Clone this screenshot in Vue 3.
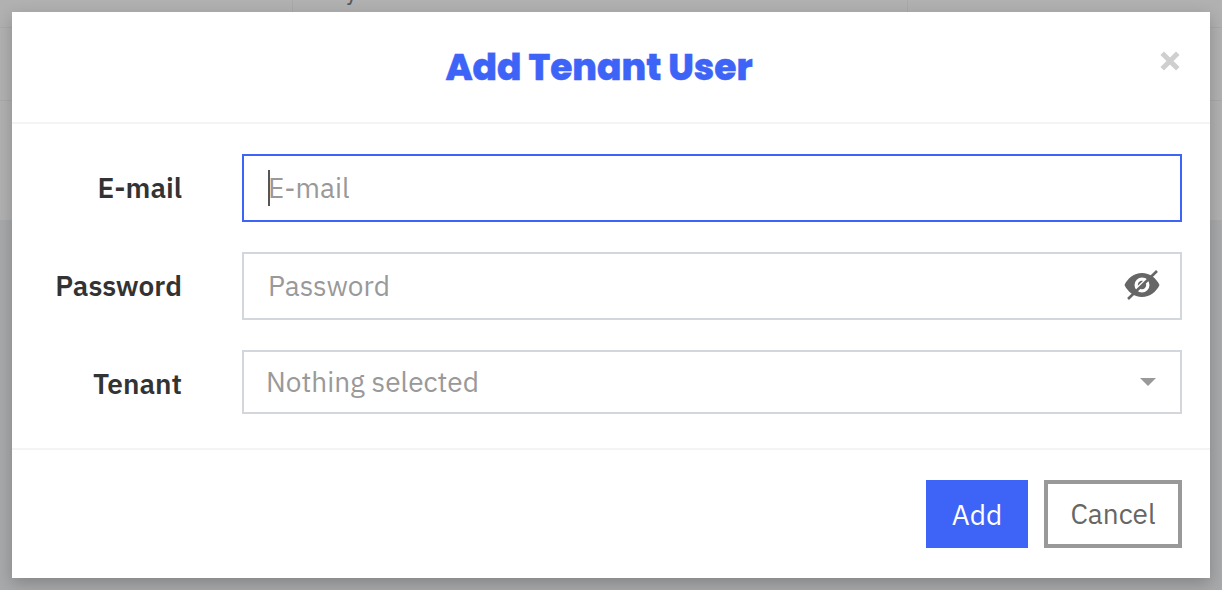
<script setup>
const fields = [
  { label: 'E-mail', placeholder: 'E-mail' },
  { label: 'Password', placeholder: 'Password' },
]
</script>

<template>
  <div class="page">
    <div class="backdrop">
      <div class="bg-top">
        <div class="bg-row">
          <div class="bg-cell-a"></div>
          <div class="bg-cell-b"><span class="bg-text">Only one</span></div>
          <div class="bg-cell-c"></div>
        </div>
        <div class="bg-row2"></div>
      </div>
    </div>
    <section class="modal">
      <header class="modal-head">
        <h2 class="title">Add Tenant User</h2>
        <svg class="close" viewBox="0 0 20 20" width="20" height="20" aria-label="Close">
          <path d="M2.2 2.2 L17.8 17.8 M17.8 2.2 L2.2 17.8" stroke="#cfcfcf" stroke-width="5" fill="none" />
        </svg>
      </header>
      <div class="modal-body">
        <div class="row">
          <label class="lbl">{{ fields[0].label }}</label>
          <div class="box focus">
            <i class="caret"></i>
            <span class="ph">{{ fields[0].placeholder }}</span>
          </div>
        </div>
        <div class="row">
          <label class="lbl">{{ fields[1].label }}</label>
          <div class="box">
            <span class="ph">{{ fields[1].placeholder }}</span>
            <svg class="eye" viewBox="0 0 36 32" width="36" height="32">
              <path fill="#666" fill-rule="evenodd" d="M18 4C10 4 3.500 9.500 0.500 16c3 6.500 9.500 12 17.500 12s14.500-5.500 17.500-12C32.500 9.500 26 4 18 4Zm0 4.500a7.500 7.500 0 1 1 0 15 7.500 7.500 0 0 1 0-15Z" />
              <circle cx="18" cy="16" r="4.200" fill="#666" />
              <path d="M23 10.500 L13 20" stroke="#fff" stroke-width="3.600" />
              <path d="M33 2 L4 30" stroke="#666" stroke-width="2.600" />
            </svg>
          </div>
        </div>
        <div class="row select-row">
          <label class="lbl">Tenant</label>
          <div class="box select">
            <span class="ph">Nothing selected</span>
            <i class="arrow"></i>
          </div>
        </div>
      </div>
      <footer class="modal-foot">
        <button class="btn primary" type="button">Add</button>
        <button class="btn outline" type="button">Cancel</button>
      </footer>
    </section>
  </div>
</template>

<style>
html, body { margin: 0; overflow: hidden; background: #a8a8a8; }
</style>

<style scoped>
.page {
  position: relative;
  width: 1222px;
  height: 590px;
  overflow: hidden;
  font-family: "IBM Plex Sans", "Noto Sans", "Open Sans", sans-serif;
}
.backdrop {
  position: absolute;
  inset: 0;
  background: #a8a9aa;
}
.bg-top { height: 220px; background: #b1b1b1; }
.bg-row { height: 27px; display: flex; border-bottom: 1px solid #a9a9a9; }
.bg-cell-a { width: 292px; }
.bg-cell-b { width: 614px; border-left: 1px solid #a9a9a9; border-right: 1px solid #a9a9a9; overflow: hidden; }
.bg-text { display: block; margin: -22px 0 0 12px; font-size: 26px; line-height: 24px; color: #5a5a5a; }
.bg-row2 { height: 72px; border-bottom: 1px solid #a9a9a9; }
.modal {
  position: relative;
  box-sizing: border-box;
  width: 1198px;
  height: 566px;
  margin: 12px 0 0 12px;
  display: flex;
  flex-direction: column;
  background: #fff;
  box-shadow: 0 5px 15px rgba(0, 0, 0, 0.22);
}
.modal-head {
  position: relative;
  box-sizing: border-box;
  height: 112px;
  padding: 0 24px 0 0;
  display: flex;
  align-items: center;
  justify-content: center;
  border-bottom: 2px solid #f4f4f4;
}
.title {
  margin: 0;
  font-family: "Poppins", "Inter", "Open Sans", sans-serif;
  font-size: 36px;
  font-weight: 800;
  -webkit-text-stroke: 0.4px #3d64f7;
  color: #3d64f7;
}
.close {
  position: absolute;
  right: 30px;
  top: 39px;
}
.modal-body {
  box-sizing: border-box;
  height: 326px;
  padding: 30px 28px 0 0;
  display: flex;
  flex-direction: column;
  gap: 30px;
  border-bottom: 2px solid #f4f4f4;
}
.row {
  display: flex;
  align-items: center;
  gap: 60px;
}
.lbl {
  width: 170px;
  padding-bottom: 2px;
  text-align: right;
  font-size: 28px;
  font-weight: 600;
  color: #333;
}
.select-row .lbl { padding: 2px 0 0; }
.box {
  box-sizing: border-box;
  flex: 1;
  height: 68px;
  display: flex;
  align-items: center;
  padding: 0 20px 0 24px;
  border: 2px solid #d3d7dd;
}
.box.focus { border-color: #3d64f7; }
.select { height: 64px; padding-left: 22px; }
.ph {
  flex: 1;
  padding-bottom: 2px;
  font-size: 28px;
  color: #999;
}
.focus .ph { margin-left: -1px; }
.caret {
  width: 2px;
  height: 36px;
  margin-right: -1px;
  background: #555;
}
.eye { flex: none; margin-top: -2px; }
.arrow {
  width: 0;
  height: 0;
  margin-right: 4px;
  border-left: 8px solid transparent;
  border-right: 8px solid transparent;
  border-top: 8px solid #999;
}
.modal-foot {
  flex: 1;
  display: flex;
  justify-content: flex-end;
  align-items: flex-start;
  gap: 16px;
  padding: 30px 28px 0 0;
}
.btn {
  box-sizing: border-box;
  height: 68px;
  font-family: inherit;
  font-size: 28px;
  border-radius: 0;
}
.primary {
  width: 102px;
  border: 0;
  background: #3d64f7;
  color: #fff;
}
.outline {
  width: 138px;
  border: 4px solid #999;
  padding-bottom: 2px;
  background: #fff;
  color: #666;
}
</style>
